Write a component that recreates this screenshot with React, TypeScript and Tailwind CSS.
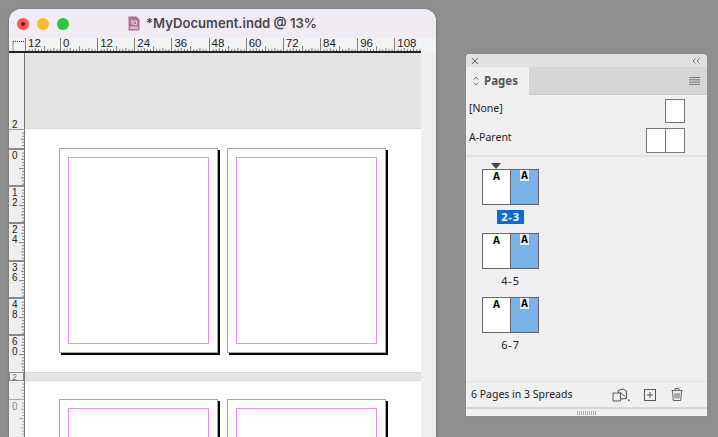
const hLabels = ["0", "12", "24", "36", "48", "60", "72", "84", "96", "108"];

const vCells = [
  { digits: ["0"], h: "h-[37px]" },
  { digits: ["1", "2"], h: "h-[37px]" },
  { digits: ["2", "4"], h: "h-[38px]" },
  { digits: ["3", "6"], h: "h-[37px]" },
  { digits: ["4", "8"], h: "h-[37px]" },
  { digits: ["6", "0"], h: "h-[38px]" },
];

function HTicks({ width }: { width: number }) {
  const ticks = [];
  for (let i = 1; i * 3.1 < width; i++) {
    const h = i % 12 === 6 ? 5 : i % 3 === 0 ? 3 : 2;
    ticks.push(<line key={i} x1={i * 3.1} x2={i * 3.1} y1={6 - h} y2={6} stroke="#666" strokeWidth="0.8" />);
  }
  return (
    <svg width={width} height="6" className="absolute left-0 bottom-0">
      {ticks}
    </svg>
  );
}

function HCell({ label, w }: { label: string; w: number }) {
  return (
    <div style={{ width: w }} className="relative shrink-0 h-full border-l border-[#808080] pl-[2px] text-[11.5px] leading-[11px] text-[#222]">
      {label}
      <HTicks width={w} />
    </div>
  );
}

function VTicks({ height, color = "#666" }: { height: number; color?: string }) {
  const ticks = [];
  for (let i = 1; i * 3.1 < height; i++) {
    const w = i % 12 === 6 ? 5 : i % 3 === 0 ? 3 : 2;
    ticks.push(<line key={i} x1={6 - w} x2={6} y1={i * 3.1} y2={i * 3.1} stroke={color} strokeWidth="0.8" />);
  }
  return (
    <svg width="6" height={height} className="absolute right-0 top-0">
      {ticks}
    </svg>
  );
}

function VCell({ digits, h, px }: { digits: string[]; h: string; px: number }) {
  return (
    <div className={`relative ${h} shrink-0 border-t-2 border-[#8a8a8a] pl-[3px] pt-[1px] flex flex-col text-[10px] leading-[10px] text-[#222]`}>
      {digits.map((d, i) => (
        <span key={i}>{d}</span>
      ))}
      <VTicks height={px} />
    </div>
  );
}

function VerticalRuler() {
  return (
    <div className="w-[16px] shrink-0 h-full bg-[#efefef] border-r border-[#777] flex flex-col overflow-hidden">
      <div className="h-[76px] shrink-0 flex items-end pl-[3px] text-[10px] leading-[8px] text-[#222]">2</div>
      <div className="relative h-[19px] shrink-0 border-t border-[#999]">
        <VTicks height={18} />
      </div>
      {vCells.map((c, i) => (
        <VCell key={i} digits={c.digits} h={c.h} px={36} />
      ))}
      <div className="h-[9px] shrink-0 box-border border border-[#8a8a8a] pl-[2px] text-[9px] leading-[8px] text-[#777]">2</div>
      <div className="relative h-[18px] shrink-0">
        <VTicks height={18} color="#999" />
      </div>
      <div className="relative h-[38px] shrink-0 border-t border-[#aaa] pl-[3px] pt-[2px] text-[10px] leading-[10px] text-[#888]">
        0
        <VTicks height={38} color="#999" />
      </div>
    </div>
  );
}

function DocPage() {
  return (
    <div className="w-[159px] h-[205px] shrink-0 bg-white border border-[#a6a6a6] p-[8px] shadow-[2px_2px_0_#000]">
      <div className="w-full h-full border border-[#e88cf8]" />
    </div>
  );
}

function Spread() {
  return (
    <div className="flex gap-[9px] pl-[34px]">
      <DocPage />
      <DocPage />
    </div>
  );
}

function DocWindow() {
  return (
    <div className="ml-[9px] mt-[9px] w-[427px] h-[428px] shrink-0 rounded-t-[12px] overflow-hidden flex flex-col bg-[#efefef] shadow-[0_0_2px_#555]">
      <div className="h-[29px] shrink-0 bg-[#f1ebf3] flex items-center relative">
        <div className="absolute left-[8px] top-[9px] flex gap-[8px]">
          <div className="w-[12px] h-[12px] rounded-full bg-[#fc5753] flex items-center justify-center">
            <div className="w-[4px] h-[4px] rounded-full bg-[#7a0f0c]" />
          </div>
          <div className="w-[12px] h-[12px] rounded-full bg-[#fdbc2e]" />
          <div className="w-[12px] h-[12px] rounded-full bg-[#28c83f]" />
        </div>
        <div className="mx-auto flex items-center gap-[6px]">
          <svg width="12" height="15" viewBox="0 0 12 15">
            <path d="M0.5 0.5h8l3 3v11h-11z" fill="#b5708f" />
            <rect x="2" y="10.5" width="8" height="2.5" fill="#f1ebf3" opacity="0.6" />
            <rect x="3.5" y="3.5" width="1" height="5" fill="#f1ebf3" />
            <rect x="5.8" y="5" width="2.8" height="3.5" fill="none" stroke="#f1ebf3" strokeWidth="0.8" />
          </svg>
          <span className="text-[13.1px] font-semibold text-[#4a464c] font-['Inter',sans-serif]">*MyDocument.indd @ 13%</span>
        </div>
      </div>
      <div className="h-[15px] shrink-0 flex bg-[#f3f3f3]">
        <div className="w-[16px] shrink-0 border-b-2 border-[#222]">
          <svg width="16" height="13">
            <path d="M4 3.5h12M4 3.5v10" stroke="#333" strokeWidth="1" strokeDasharray="1 1" fill="none" />
          </svg>
        </div>
        <div className="w-[396px] shrink-0 flex border-b-2 border-[#222] overflow-hidden">
          <HCell label="12" w={35} />
          {hLabels.map((l) => (
            <HCell key={l} label={l} w={37.15} />
          ))}
        </div>
      </div>
      <div className="flex-1 min-h-0 flex">
        <VerticalRuler />
        <div className="w-[396px] shrink-0 bg-white overflow-hidden">
          <div className="h-[76px] bg-[#e4e4e4] border-b border-[#d8d8d8]" />
          <div className="h-[243px] pt-[19px]">
            <Spread />
          </div>
          <div className="h-[9px] bg-[#e4e4e4] border-y border-[#d8d8d8]" />
          <div className="pt-[18px]">
            <Spread />
          </div>
        </div>
      </div>
    </div>
  );
}

function Thumb({ w = "w-[20px]" }: { w?: string }) {
  return <div className={`${w} h-full bg-white border border-[#777]`} />;
}

function SpreadThumb({ label, active, arrow }: { label: string; active?: boolean; arrow?: boolean }) {
  return (
    <div className="w-[57px] flex flex-col items-center">
      <div className="h-[6px] w-[28px] self-start flex justify-center">
        {arrow && <div className="w-0 h-0 border-x-[5px] border-x-transparent border-t-[6px] border-t-[#444]" />}
      </div>
      <div className="w-[57px] h-[36px] flex border border-[#666] text-[10px] font-bold leading-[11px] text-black">
        <div className="w-[28px] bg-white border-r border-[#666] flex justify-center pt-[1px]">A</div>
        <div className="flex-1 bg-[#7ab2ec] flex justify-center">
          <span className="bg-[#e4eefa] w-[9px] h-[11px] text-center">A</span>
        </div>
      </div>
      <div className="h-[5px]" />
      <div className={`h-[14px] px-[4px] text-[11px] leading-[14px] tracking-[0.8px] ${active ? "bg-[#0a6ad9] text-white font-bold" : "text-[#222]"}`}>
        {label}
      </div>
    </div>
  );
}

function PagesPanel() {
  return (
    <div className="ml-[30px] mt-[54px] w-[241px] h-[362px] shrink-0 rounded-t-[4px] overflow-hidden flex flex-col bg-[#f0f0f0] shadow-[0_0_1px_#666] font-['Noto_Sans',sans-serif] text-[#222]">
      <div className="h-[13px] shrink-0 bg-[#e0e0e0] flex items-center justify-between pl-[5px] pr-[7px]">
        <svg width="8" height="8" viewBox="0 0 8 8">
          <path d="M1 1l6 6M7 1l-6 6" stroke="#666" strokeWidth="1" />
        </svg>
        <svg width="8" height="6" viewBox="0 0 8 6">
          <path d="M3.5 0.5l-2.5 2.5 2.5 2.5M7.5 0.5l-2.5 2.5 2.5 2.5" stroke="#666" strokeWidth="0.8" fill="none" />
        </svg>
      </div>
      <div className="h-[28px] shrink-0 flex bg-[#d6d6d6] border-b border-[#c8c8c8]">
        <div className="w-[63px] h-[28px] bg-[#f0f0f0] flex items-center pl-[7px] gap-[5px]">
          <svg width="6" height="10" viewBox="0 0 6 10">
            <path d="M0.8 3.5L3 1l2.2 2.5M0.8 6.5L3 9l2.2-2.5" stroke="#666" strokeWidth="0.9" fill="none" />
          </svg>
          <span className="text-[11.5px] font-bold text-[#555]">Pages</span>
        </div>
        <div className="flex-1 flex items-center justify-end pr-[7px]">
          <svg width="11" height="8" viewBox="0 0 11 8">
            <path d="M0 0.5h11M0 2.8h11M0 5.1h11M0 7.4h11" stroke="#777" strokeWidth="1" />
          </svg>
        </div>
      </div>
      <div className="h-[62px] shrink-0 flex flex-col pt-[4px] pr-[22px] pl-[3px] border-b-2 border-[#e2e2e2]">
        <div className="h-[24px] flex items-center justify-between text-[10.5px]">
          <span className="pb-[4px]">[None]</span>
          <Thumb />
        </div>
        <div className="mt-[5px] h-[25px] flex items-center justify-between text-[10.5px]">
          <span className="pb-[6px]">A-Parent</span>
          <div className="h-full flex">
            <Thumb />
            <Thumb w="w-[20px] -ml-px" />
          </div>
        </div>
      </div>
      <div className="flex-1 min-h-0 flex flex-col items-start pl-[16px] pt-[6px] gap-[8px] border-b border-[#e2e2e2]">
        <SpreadThumb label="2-3" active arrow />
        <div className="-mt-[5px]">
          <SpreadThumb label="4-5" />
        </div>
        <div className="-mt-[5px]">
          <SpreadThumb label="6-7" />
        </div>
      </div>
      <div className="h-[25px] shrink-0 flex items-center pl-[5px] text-[10.5px]">
        <span className="w-[140px]">6 Pages in 3 Spreads</span>
        <svg width="18" height="14" viewBox="0 0 18 14" className="ml-[1px]">
          <path d="M1 5h7.5v8H1zM6.5 5L6 2.5 11 1l3.5 2v7.5L8.5 11" stroke="#555" strokeWidth="1" fill="none" />
          <path d="M8 4l5.5 5" stroke="#555" strokeWidth="1" />
          <rect x="16" y="11.5" width="1.5" height="1.5" fill="#555" />
        </svg>
        <svg width="12" height="12" viewBox="0 0 12 12" className="ml-[14px]">
          <rect x="0.5" y="0.5" width="11" height="11" stroke="#555" fill="none" />
          <path d="M3 6h6M6 3v6" stroke="#555" strokeWidth="1" />
        </svg>
        <svg width="12" height="13" viewBox="0 0 12 13" className="ml-[15px]">
          <path d="M0.5 2.5h11M4 2.5v-2h4v2M1.5 2.5l0.7 10h7.6l0.7-10M4 5v5.5M6 5v5.5M8 5v5.5" stroke="#666" strokeWidth="1" fill="none" />
        </svg>
      </div>
      <div className="h-[9px] shrink-0 border-t-2 border-[#d8d8d8] flex items-center justify-center">
        <div className="w-[20px] h-[4px] bg-[repeating-linear-gradient(90deg,#aaa_0,#aaa_1px,transparent_1px,transparent_2px)]" />
      </div>
    </div>
  );
}

export default function App() {
  return (
    <div className="w-[718px] h-[437px] overflow-hidden bg-[#8f8f8f] flex items-start font-['Liberation_Sans',sans-serif]">
      <DocWindow />
      <PagesPanel />
    </div>
  );
}
